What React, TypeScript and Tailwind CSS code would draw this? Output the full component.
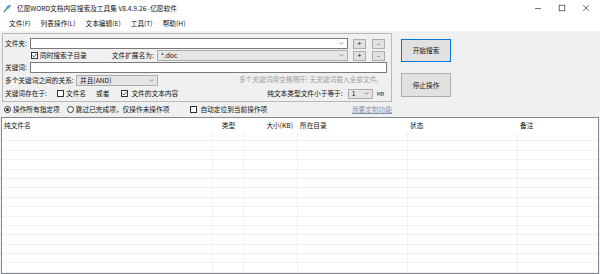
import React from "react";

function Check({ checked }: { checked?: boolean }) {
  return (
    <span className="inline-flex h-[7px] w-[7px] shrink-0 items-center justify-center border border-[#333333] bg-white">
      {checked && (
        <svg viewBox="0 0 5 5" className="h-[5px] w-[5px]">
          <path d="M0.5 2.4 L1.9 3.9 L4.6 0.9" fill="none" stroke="#222" strokeWidth="0.8" />
        </svg>
      )}
    </span>
  );
}

function Radio({ checked }: { checked?: boolean }) {
  return (
    <span className="inline-flex h-[7px] w-[7px] shrink-0 items-center justify-center rounded-full border border-[#333333] bg-white">
      {checked && <span className="h-[3px] w-[3px] rounded-full bg-[#222222]" />}
    </span>
  );
}

function Chevron() {
  return (
    <svg viewBox="0 0 6 4" className="mr-[3px] h-[3px] w-[5px] shrink-0">
      <path d="M0.5 0.5 L3 3 L5.5 0.5" fill="none" stroke="#555" strokeWidth="0.8" />
    </svg>
  );
}

function Combo({ text, className, grey }: { text?: string; className: string; grey?: boolean }) {
  return (
    <div
      className={
        "flex items-center border " +
        (grey ? "border-[#adadad] bg-[#e5e5e5] " : "border-[#7a7a7a] bg-white ") +
        className
      }
    >
      <span className="min-w-0 flex-1 pl-[3px] leading-none">{text}</span>
      <Chevron />
    </div>
  );
}

function SmallBtn({ label, className }: { label: string; className?: string }) {
  return (
    <div
      className={
        "flex h-[10px] w-[13px] shrink-0 items-center justify-center border border-[#adadad] bg-[#e1e1e1] text-[7px] leading-none " +
        (className ?? "")
      }
    >
      {label}
    </div>
  );
}

const rows = Array.from({ length: 15 }, (_, i) => i);

export default function App() {
  return (
    <div className="flex h-[274px] w-[600px] flex-col overflow-hidden whitespace-nowrap bg-[#f0f0f0] font-['Noto_Sans_CJK_SC','Noto_Sans',sans-serif] text-[6.7px] leading-none text-[#111111]">
      {/* Title bar */}
      <div className="flex h-[16px] shrink-0 items-center bg-white">
        <svg viewBox="0 0 10 10" className="ml-[3px] h-[9px] w-[9px]">
          <path d="M1 9 L4 5" stroke="#2e7d32" strokeWidth="1.2" />
          <path d="M3 6 C3 3 5 1 9 1 C8 4 6 6 3 6 Z" fill="#4a90d9" />
          <path d="M4 5 L7 2.5" stroke="#8bc34a" strokeWidth="0.8" />
        </svg>
        <span className="ml-[5px]">亿愿WORD文档内容搜索及工具集 V8.4.9.26 -亿愿软件</span>
        <div className="ml-auto flex items-center">
          <svg viewBox="0 0 8 8" className="h-[8px] w-[8px]">
            <path d="M1 4.5 H7" stroke="#333" strokeWidth="0.7" />
          </svg>
          <svg viewBox="0 0 8 8" className="ml-[16px] h-[8px] w-[8px]">
            <rect x="1.2" y="1.2" width="5.6" height="5.6" fill="none" stroke="#333" strokeWidth="0.7" />
          </svg>
          <svg viewBox="0 0 8 8" className="ml-[16px] mr-[10px] h-[8px] w-[8px]">
            <path d="M1.2 1.2 L6.8 6.8 M6.8 1.2 L1.2 6.8" stroke="#333" strokeWidth="0.7" />
          </svg>
        </div>
      </div>

      {/* Menu bar */}
      <div className="flex h-[16px] shrink-0 items-center gap-[10px] border-b border-[#f2f2f2] bg-white pl-[9px]">
        <span>文件(F)</span>
        <span>列表操作(L)</span>
        <span>文本编辑(E)</span>
        <span>工具(T)</span>
        <span>帮助(H)</span>
      </div>

      {/* Top panel */}
      <div className="mt-[1px] flex shrink-0 pl-[2px]">
        <div className="flex w-[390px] flex-col border border-[#b9b9b9] pb-[2px] pl-[2px] pr-[4px] pt-[4px]">
          {/* Row 1 */}
          <div className="flex h-[11px] items-center">
            <span className="w-[25px] shrink-0">文件夹:</span>
            <Combo className="h-[11px] flex-1" />
            <SmallBtn label="+" className="ml-[5px]" />
            <SmallBtn label="-" className="ml-[6px] mr-[2px]" />
          </div>
          {/* Row 2 */}
          <div className="mt-[1px] flex h-[11px] items-center">
            <span className="ml-[26px]">
              <Check checked />
            </span>
            <span className="ml-[2px]">同时搜索子目录</span>
            <span className="ml-[25px]">文件扩展名为:</span>
            <Combo text="*.doc" grey className="ml-[3px] h-[11px] flex-1" />
            <SmallBtn label="+" className="ml-[5px]" />
            <SmallBtn label="-" className="ml-[6px] mr-[2px]" />
          </div>
          {/* Row 3 */}
          <div className="mt-[1px] flex h-[11px] items-center">
            <span className="w-[25px] shrink-0">关键词:</span>
            <div className="h-[11px] flex-1 border border-[#7a7a7a] bg-white" />
          </div>
          {/* Row 4 */}
          <div className="mt-[2px] flex h-[11px] items-center">
            <span className="w-[71px] shrink-0">多个关键词之间的关系:</span>
            <Combo text="并且(AND)" grey className="h-[11px] w-[82px] shrink-0" />
            <span className="mb-[3px] ml-auto mr-[4px] text-[#a0a0a0]">多个关键词用空格隔开! 无关键词载入全部文件。</span>
          </div>
          {/* Row 5 */}
          <div className="mt-[2px] flex h-[11px] items-center">
            <span className="w-[52px] shrink-0">关键词存在于:</span>
            <Check />
            <span className="ml-[2px]">文件名</span>
            <span className="ml-[10px]">或者</span>
            <span className="ml-[12px]">
              <Check checked />
            </span>
            <span className="ml-[3px]">文件的文本内容</span>
            <span className="ml-auto">纯文本类型文件小于等于:</span>
            <Combo text="1" grey className="ml-[5px] h-[10px] w-[25px] shrink-0" />
            <span className="ml-[4px] mr-[3px] text-[5px]">MB</span>
          </div>
        </div>

        <div className="ml-[9px] flex flex-col">
          <div className="mt-[6px] flex h-[23px] w-[50px] items-center justify-center border border-[#0078d7] bg-[#e1e1e1]">
            开始搜索
          </div>
          <div className="mt-[11px] flex h-[24px] w-[50px] items-center justify-center border border-[#adadad] bg-[#e1e1e1]">
            停止操作
          </div>
        </div>
      </div>

      {/* Options row */}
      <div className="flex h-[15px] shrink-0 items-center pl-[4px]">
        <Radio checked />
        <span className="ml-[2px]">操作所有指定项</span>
        <span className="ml-[7px]">
          <Radio />
        </span>
        <span className="ml-[2px]">跳过已完成项，仅操作未操作项</span>
        <span className="ml-[21px]">
          <Check />
        </span>
        <span className="ml-[3px]">自动定位到当前操作项</span>
        <span className="ml-auto mr-[208px] text-[#8594ad] underline">我要定制功能</span>
      </div>

      {/* List view */}
      <div className="ml-[1px] flex w-[598px] flex-1 flex-col border border-[#828790] bg-white">
        <div className="flex h-[14px] shrink-0 items-center">
          <div className="w-[211px] pl-[2px]">纯文件名</div>
          <div className="w-[31px] text-center">类型</div>
          <div className="w-[54px] pr-[5px] text-right">大小(KB)</div>
          <div className="w-[110px] pl-[2px]">所在目录</div>
          <div className="w-[110px] pl-[2px]">状态</div>
          <div className="flex-1 pl-[2px]">备注</div>
        </div>
        {rows.map((r) => (
          <div key={r} className="flex h-[9.4px] shrink-0 border-b border-[#f0f0f0]">
            <div className="w-[211px] border-r border-[#f0f0f0]" />
            <div className="w-[31px] border-r border-[#f0f0f0]" />
            <div className="w-[54px] border-r border-[#f0f0f0]" />
            <div className="w-[110px] border-r border-[#f0f0f0]" />
            <div className="w-[110px] border-r border-[#f0f0f0]" />
            <div className="flex-1" />
          </div>
        ))}
      </div>
    </div>
  );
}
